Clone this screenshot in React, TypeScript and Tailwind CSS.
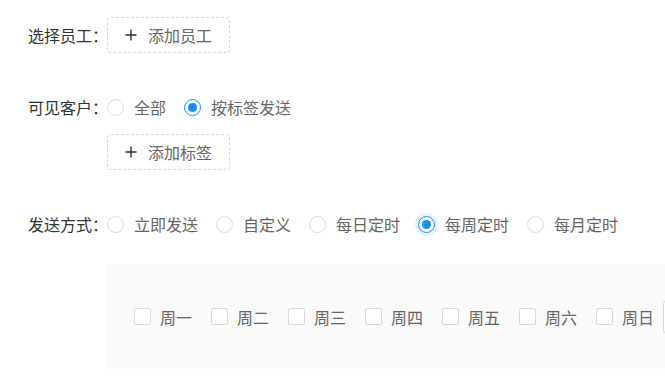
import type { FC } from "react";

const font = { fontFamily: '"Noto Sans CJK SC", "Noto Sans", sans-serif' };

const Plus: FC = () => (
    <svg width="12" height="12" viewBox="0 0 12 12" className="shrink-0">
        <path d="M6 0.5V11.5M0.5 6H11.5" stroke="#333333" strokeWidth="1.4" />
    </svg>
);

const AddButton: FC<{ text: string }> = ({ text }) => (
    <div className="flex items-center justify-center gap-[11px] w-[123px] h-9 border border-dashed border-[#d9d9d9] rounded-[4px] bg-white">
        <Plus />
        <span className="text-[16px] leading-none text-[#666666]">{text}</span>
    </div>
);

const Radio: FC<{ label: string; checked?: boolean; focused?: boolean }> = ({ label, checked, focused }) => (
    <div className="flex items-center gap-[10px]">
        <span
            className={
                "flex items-center justify-center w-[17px] h-[17px] rounded-full border bg-white " +
                (checked ? "border-[#1890ff]" : "border-[#d9d9d9]") +
                (focused ? " shadow-[0_0_0_3px_rgba(24,144,255,0.12)]" : "")
            }
        >
            {checked && <span className="w-[9px] h-[9px] rounded-full bg-[#1890ff]" />}
        </span>
        <span className="text-[16px] leading-none text-[#666666] whitespace-nowrap">{label}</span>
    </div>
);

const Check: FC<{ label: string }> = ({ label }) => (
    <div className="flex items-center gap-[9px] mr-[19px]">
        <span className="w-[17px] h-[17px] rounded-[2px] border border-[#d9d9d9] bg-white" />
        <span className="text-[16px] leading-none text-[#666666] whitespace-nowrap">{label}</span>
    </div>
);

export default function App() {
    const days = ["周一", "周二", "周三", "周四", "周五", "周六", "周日"];

    return (
        <div className="w-[665px] h-[387px] overflow-hidden bg-white pt-[17px] pl-[28px]" style={font}>
            <div className="flex items-center">
                <div className="w-[79px] shrink-0 whitespace-nowrap text-[16px] text-[#333333] leading-none">选择员工：</div>
                <AddButton text="添加员工" />
            </div>

            <div className="flex mt-9">
                <div className="w-[79px] shrink-0 whitespace-nowrap h-9 flex items-center text-[16px] text-[#333333] leading-none">可见客户：</div>
                <div className="flex flex-col">
                    <div className="flex items-center h-9 gap-[18px]">
                        <Radio label="全部" />
                        <Radio label="按标签发送" checked />
                    </div>
                    <div className="mt-[9px]">
                        <AddButton text="添加标签" />
                    </div>
                </div>
            </div>

            <div className="flex items-center h-9 mt-9">
                <div className="w-[79px] shrink-0 whitespace-nowrap text-[16px] text-[#333333] leading-none">发送方式：</div>
                <div className="flex items-center gap-[18px]">
                    <Radio label="立即发送" />
                    <Radio label="自定义" />
                    <Radio label="每日定时" />
                    <Radio label="每周定时" checked focused />
                    <Radio label="每月定时" />
                </div>
            </div>

            <div className="flex mt-[22px]">
                <div className="w-[79px] shrink-0" />
                <div className="flex items-center shrink-0 w-[700px] h-[105px] bg-[#fafafa] pl-[27px]">
                    {days.map((d) => (
                        <Check key={d} label={d} />
                    ))}
                    <div className="-ml-[10px] w-[120px] h-[34px] border border-[#d9d9d9] rounded-[4px] bg-white shrink-0" />
                </div>
            </div>
        </div>
    );
}
